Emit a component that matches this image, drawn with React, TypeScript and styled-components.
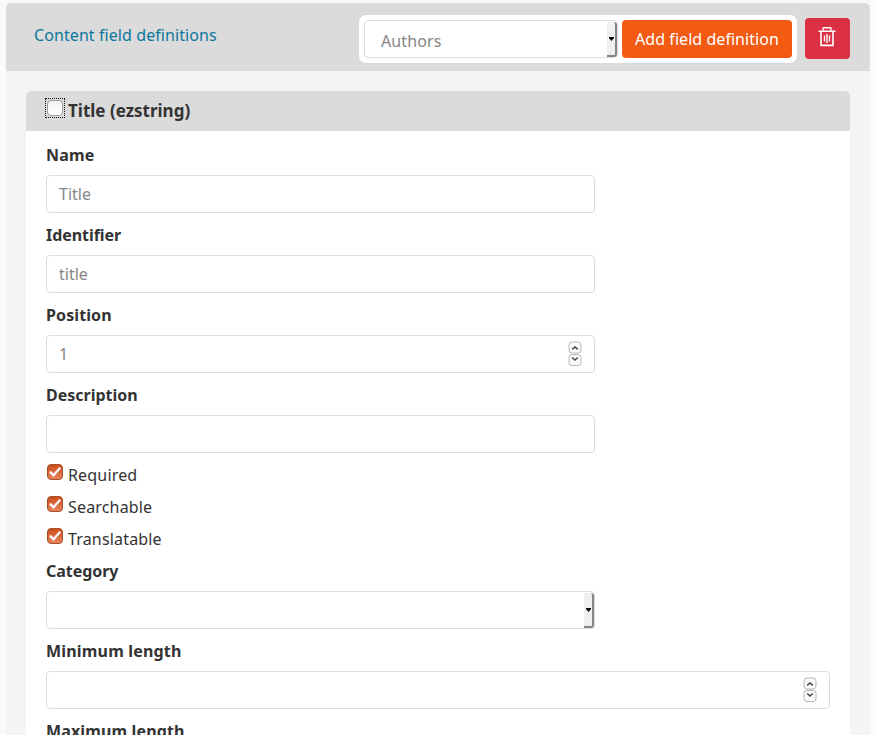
import React from "react";
import styled, { createGlobalStyle } from "styled-components";

const GlobalStyle = createGlobalStyle`
  *, *::before, *::after { box-sizing: border-box; }
  html, body { margin: 0; height: 100%; overflow: hidden; background: #fafafa; }
  body { font: 16px/24px "Noto Sans", sans-serif; color: #333; }
  input, select, button { font: inherit; margin: 0; }
`;

const Page = styled.main`
  height: 735px;
  padding: 3px 6px 0;
  overflow: hidden;
`;

const Card = styled.section`
  background: #f4f4f4;
  border-radius: 5px 5px 0 0;
  overflow: hidden;
`;

const CardHeader = styled.header`
  display: flex;
  align-items: flex-start;
  height: 68px;
  padding: 12px 20px 0 28px;
  background: #dbdbdb;
`;

const CardTitle = styled.a`
  margin-top: 8px;
  color: #0b779e;
  letter-spacing: 0.08px;
  text-decoration: none;
`;

const AddGroup = styled.div`
  display: flex;
  gap: 4px;
  width: 438px;
  height: 48px;
  margin: 0 8px 0 auto;
  padding: 5px;
  background: #fff;
  border-radius: 7px;
`;

const AddButton = styled.button`
  width: 170px;
  height: 38px;
  padding: 0;
  border: 0;
  border-radius: 4px;
  background: #f35a12;
  color: #fff;
  letter-spacing: 0.05px;
  white-space: nowrap;
`;

const DeleteButton = styled.button`
  display: flex;
  align-items: flex-start;
  width: 45px;
  height: 41px;
  margin-top: 3px;
  padding: 9px 0 0 13px;
  border: 0;
  border-radius: 4px;
  background: #db2f44;
`;

const Panel = styled.article`
  margin: 20px 20px 0;
  background: #fff;
  border-radius: 5px 5px 0 0;
`;

const PanelHeader = styled.h2`
  display: flex;
  align-items: flex-start;
  height: 40px;
  margin: 0;
  padding: 7px 19px 0;
  background: #dbdbdb;
  border-radius: 5px 5px 0 0;
  font-size: 17px;
  font-weight: 700;
  line-height: 26px;
`;

const FocusRing = styled.span`
  display: flex;
  align-items: center;
  justify-content: center;
  width: 20px;
  height: 20px;
  margin-right: 3px;
  border: 1px dotted #111;
`;

const EmptyCheck = styled.input`
  appearance: none;
  width: 16px;
  height: 16px;
  border: 1px solid #a0a0a0;
  border-radius: 4px;
  background: linear-gradient(#f2f2f2, #fff);
`;

const PanelBody = styled.div`
  padding: 12px 20px;
`;

const Field = styled.div`
  margin-bottom: 10px;
`;

const Label = styled.label<{ $spacing?: number }>`
  display: block;
  margin-bottom: 8px;
  font-weight: 700;
  letter-spacing: ${(p) => p.$spacing ?? 0}px;
`;

const Control = styled.div<{ $width?: number }>`
  position: relative;
  width: ${(p) => (p.$width ? `${p.$width}px` : "100%")};
  height: 38px;
`;

const TextInput = styled.input`
  display: block;
  width: 100%;
  height: 38px;
  padding: 0 12px;
  border: 1px solid #dcdcdc;
  border-radius: 4px;
  background: #fff;
  color: #868686;
  outline: 0;
`;

const SelectInput = styled.select`
  appearance: none;
  display: block;
  width: 100%;
  height: 38px;
  padding: 3px 16px 0;
  border: 1px solid #dcdcdc;
  border-radius: 4px;
  background: #fff;
  color: #868686;
  letter-spacing: 0.12px;
`;

const SelectArrow = styled.span`
  position: absolute;
  top: 2px;
  right: 1px;
  width: 10px;
  height: 35px;
  display: flex;
  align-items: center;
  padding-left: 2px;
  background: #f0f0ef;
  border: solid #858585;
  border-width: 0 2px 2px 0;
  border-radius: 0 3px 3px 0;
`;

const Spinner = styled.span`
  position: absolute;
  top: 6px;
  right: 13px;
  width: 14px;
  height: 26px;
`;

const CheckRow = styled.label`
  display: flex;
  align-items: flex-start;
  height: 24px;
  margin-bottom: 8px;
  letter-spacing: 0.17px;

  svg { margin: 1px 5px 0 1px; }
`;

const Trash = () => (
  <svg width="18" height="20" viewBox="0 0 18 20" fill="none" stroke="#fff">
    <path d="M.5 4.2H17.5" strokeWidth="1.6" />
    <path d="M5 3.5V1.5Q5 .8 5.7 .8H12.3Q13 .8 13 1.5V3.5" strokeWidth="1.4" />
    <path d="M3 4V18.4H15V4" strokeWidth="1.6" />
    <path d="M6.5 8.5V14.5M9 7V16M11.5 8.5V14.5" strokeWidth="1.4" />
  </svg>
);

const Checked = () => (
  <svg width="16" height="16" viewBox="0 0 16 16">
    <defs>
      <linearGradient id="checkFill" x2="0" y2="1">
        <stop stopColor="#cb4b1b" />
        <stop offset="1" stopColor="#e9845c" />
      </linearGradient>
    </defs>
    <rect x=".5" y=".5" width="15" height="15" rx="3.5" fill="url(#checkFill)" stroke="#a4532f" />
    <path d="M3 7.6L6.5 11.2L13.2 3.8" fill="none" stroke="#fff" strokeWidth="2.3" />
  </svg>
);

const Arrow = () => (
  <SelectArrow>
    <svg width="5" height="4" viewBox="0 0 5 4"><path d="M0 0H5V1L2.5 4L0 1Z" fill="#000" /></svg>
  </SelectArrow>
);

const Steps = () => (
  <Spinner>
    <svg width="14" height="26" viewBox="0 0 14 26" fill="#fafafa" stroke="#b8b8b8">
      <rect x="1" y="1" width="12" height="11" rx="3" />
      <rect x="1" y="13.5" width="12" height="11" rx="3" />
      <path d="M4.2 8.4L7 6L9.8 8.4M4.2 16.5L7 19L9.8 16.5" fill="none" stroke="#444" strokeWidth="1.5" />
    </svg>
  </Spinner>
);

type FieldSpec = {
  label: string;
  value?: string;
  kind?: "text" | "number" | "select";
  width?: number;
  spacing?: number;
};

const FormField = ({ label, value = "", kind = "text", width, spacing }: FieldSpec) => (
  <Field>
    <Label $spacing={spacing}>{label}</Label>
    <Control $width={width}>
      {kind === "select" ? (
        <SelectInput aria-label={label}><option>{value}</option></SelectInput>
      ) : (
        <TextInput aria-label={label} defaultValue={value} />
      )}
      {kind === "select" && <Arrow />}
      {kind === "number" && <Steps />}
    </Control>
  </Field>
);

export default function App() {
  return (
    <Page>
      <GlobalStyle />
      <Card>
        <CardHeader>
          <CardTitle>Content field definitions</CardTitle>
          <AddGroup>
            <Control $width={254}>
              <SelectInput aria-label="Field type"><option>Authors</option></SelectInput>
              <Arrow />
            </Control>
            <AddButton>Add field definition</AddButton>
          </AddGroup>
          <DeleteButton aria-label="Delete"><Trash /></DeleteButton>
        </CardHeader>
        <Panel>
          <PanelHeader>
            <FocusRing><EmptyCheck type="checkbox" /></FocusRing>
            Title (ezstring)
          </PanelHeader>
          <PanelBody>
            <FormField label="Name" value="Title" width={549} spacing={0.2} />
            <FormField label="Identifier" value="title" width={549} spacing={-0.05} />
            <FormField label="Position" value="1" kind="number" width={549} spacing={0.1} />
            <FormField label="Description" width={549} />
            {["Required", "Searchable", "Translatable"].map((name) => (
              <CheckRow key={name}><Checked />{name}</CheckRow>
            ))}
            <FormField label="Category" kind="select" width={549} spacing={-0.05} />
            <FormField label="Minimum length" kind="number" spacing={0.18} />
            <FormField label="Maximum length" kind="number" spacing={0.14} />
          </PanelBody>
        </Panel>
      </Card>
    </Page>
  );
}
